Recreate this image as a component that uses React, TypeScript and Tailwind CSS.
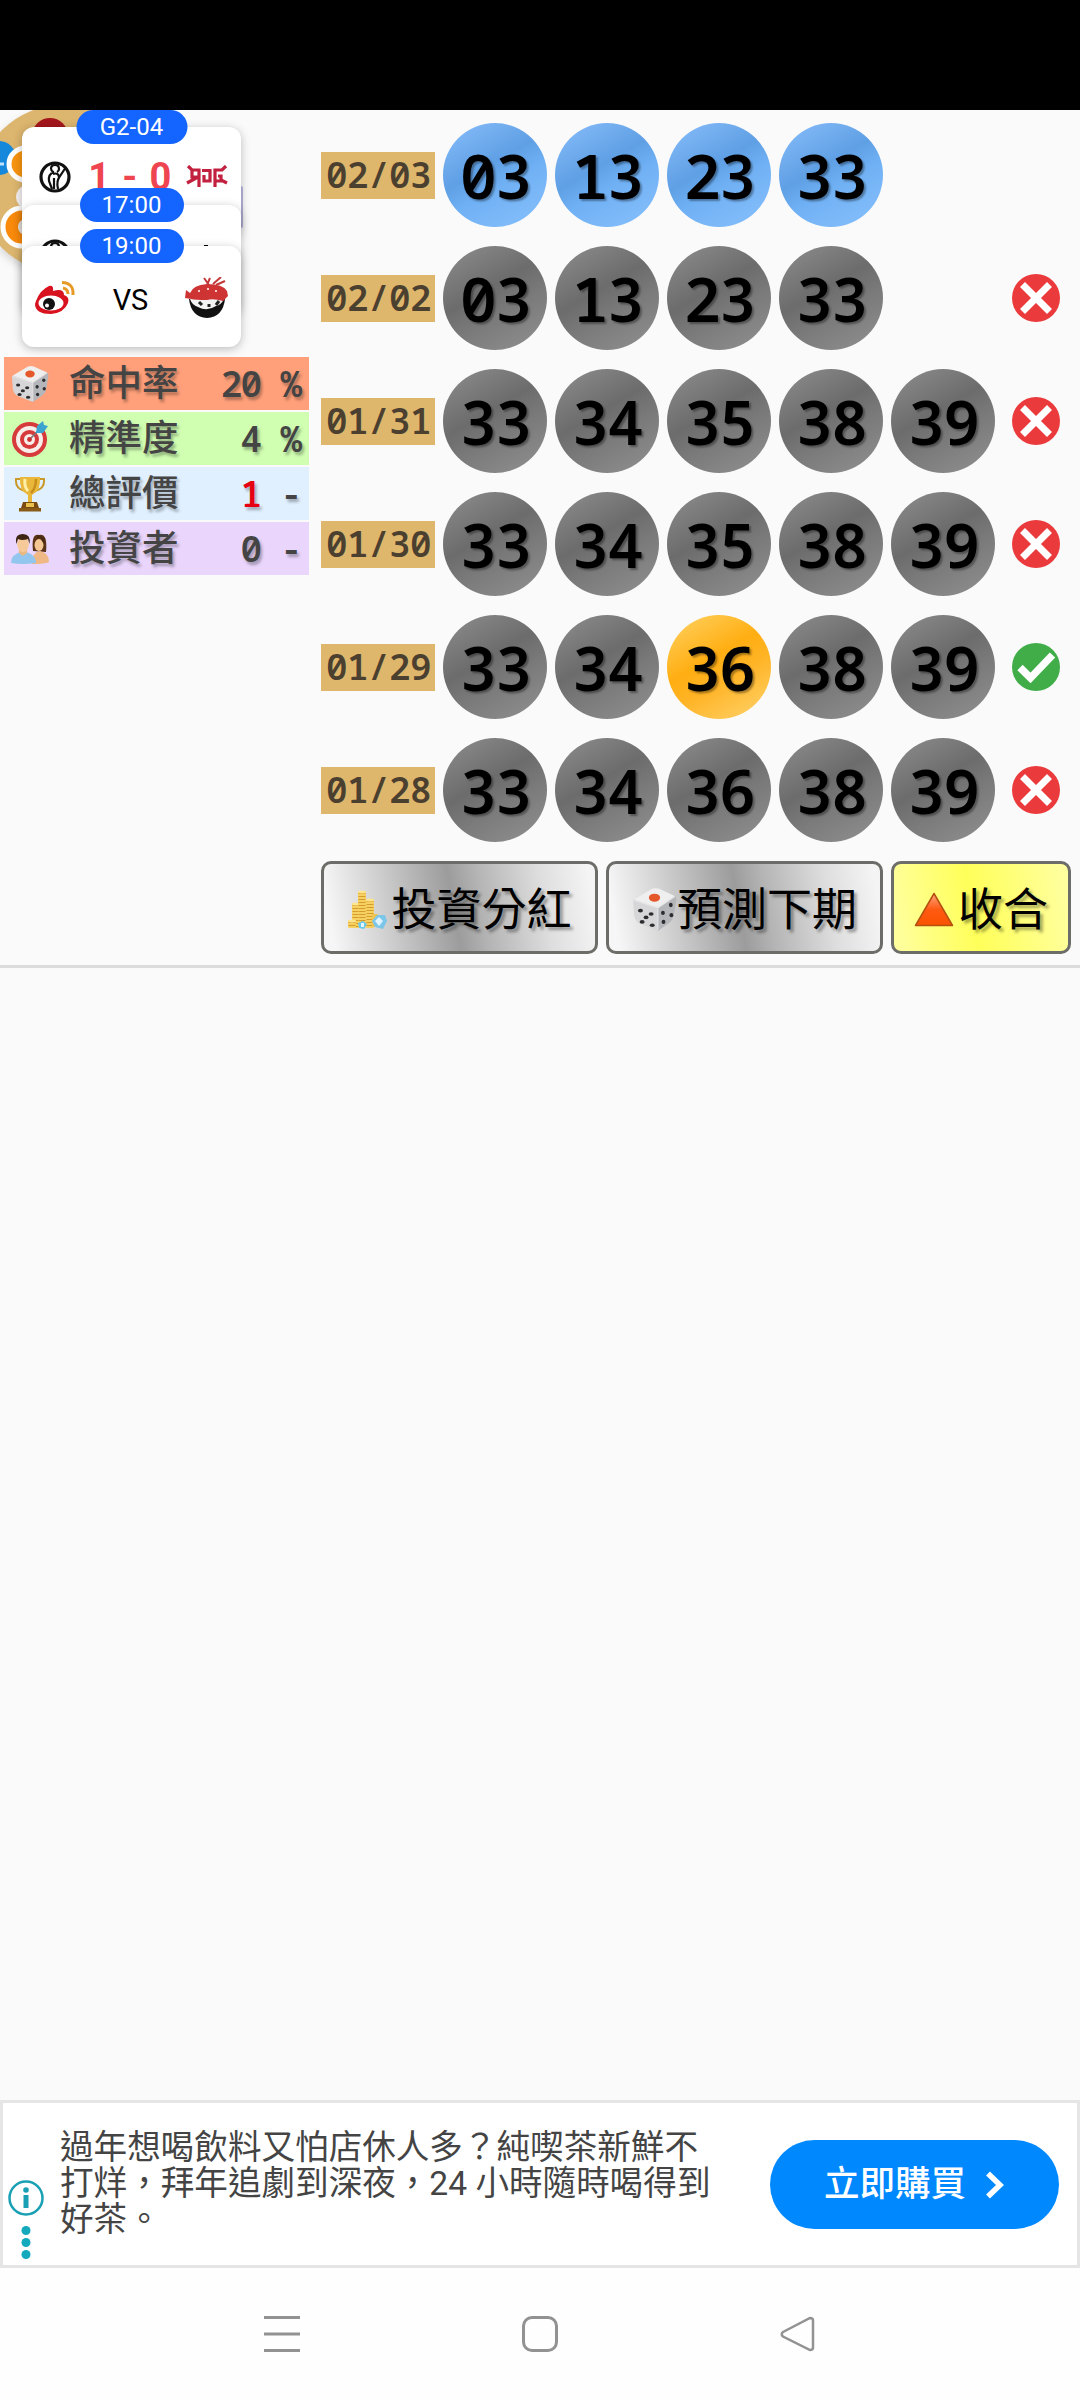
import type { ReactNode } from 'react'

type Tone = 'blue' | 'gray' | 'gold'

type Draw = {
  date: string
  numbers: string[]
  tone: Tone
  hit?: string
  result?: 'win' | 'lose'
}

const draws: Draw[] = [
  { date: '02/03', numbers: ['03', '13', '23', '33'], tone: 'blue' },
  { date: '02/02', numbers: ['03', '13', '23', '33'], tone: 'gray', result: 'lose' },
  { date: '01/31', numbers: ['33', '34', '35', '38', '39'], tone: 'gray', result: 'lose' },
  { date: '01/30', numbers: ['33', '34', '35', '38', '39'], tone: 'gray', result: 'lose' },
  { date: '01/29', numbers: ['33', '34', '36', '38', '39'], tone: 'gray', hit: '36', result: 'win' },
  { date: '01/28', numbers: ['33', '34', '36', '38', '39'], tone: 'gray', result: 'lose' },
]

const tones: Record<Tone, string> = {
  blue: 'bg-[linear-gradient(150deg,#84bbf9_5%,#5f9fe4_42%,#6fb0f4_58%,#86bffb_95%)]',
  gray: 'bg-[linear-gradient(150deg,#8a8a8a_5%,#6c6c6c_42%,#797979_60%,#8e8e8e_95%)]',
  gold: 'bg-[linear-gradient(150deg,#ffcf5c_5%,#ffae12_42%,#ffb426_60%,#ffd066_95%)]',
}

const mono = "font-['Noto_Sans_Mono','Liberation_Mono',monospace]"
const cjk = "font-['Roboto','Noto_Sans_CJK_TC',sans-serif]"

function Dice({ className }: { className: string }) {
  return (
    <svg viewBox="0 0 40 40" className={className}>
      <path d="M1 12 Q2 10 5 12 L23 18 L23 39 L6 32 Q3 30 2 26 Z" fill="#d6d6d8" />
      <path d="M23 18 L38 8 Q40 9 39 14 L37 26 Q36 30 33 32 L23 39 Z" fill="#b4b6ba" />
      <path d="M2 11 L17 2 Q20 0.500 24 1.500 L38 8 L23 18.500 Z" fill="#efefef" />
      <path d="M2 12 L23 18.500 L38 8.500 M23 18.500 V38" stroke="#e6e6e8" fill="none" />
      <ellipse cx="20" cy="9.500" rx="5" ry="3.600" fill="#e4582c" />
      <g fill="#2d2d30">
        <ellipse cx="7.500" cy="21" rx="2.200" ry="1.600" />
        <ellipse cx="17" cy="24" rx="2.200" ry="1.600" />
        <ellipse cx="12.500" cy="27" rx="2.200" ry="1.600" />
        <ellipse cx="9" cy="31" rx="2.200" ry="1.600" />
        <ellipse cx="18" cy="34" rx="2.200" ry="1.600" />
        <ellipse cx="34.500" cy="16" rx="1.700" ry="1.900" />
        <ellipse cx="27.500" cy="23" rx="1.700" ry="1.900" />
        <ellipse cx="35" cy="25" rx="1.700" ry="1.900" />
        <ellipse cx="28" cy="31" rx="1.700" ry="1.900" />
      </g>
    </svg>
  )
}

function Target({ className }: { className: string }) {
  return (
    <svg viewBox="0 0 36 36" className={className}>
      <circle cx="17.500" cy="18.500" r="17.500" fill="#d63a3a" />
      <circle cx="17.500" cy="18.500" r="13.500" fill="#f7eeea" />
      <circle cx="17.500" cy="18.500" r="9.500" fill="#d63a3a" />
      <circle cx="17.500" cy="18.500" r="5.500" fill="#f7eeea" />
      <path d="M17 19 L28 8" stroke="#777" strokeWidth="1.600" />
      <path d="M24 12 L25 5 L31 0 L32 4 L36 5 L31 12 Z" fill="#3aa3d0" />
      <circle cx="17.500" cy="18.500" r="2.400" fill="#c33" />
    </svg>
  )
}

function Trophy({ className }: { className: string }) {
  return (
    <svg viewBox="0 0 32 36" className={className}>
      <path d="M6 3 H2 Q1 13 11 15 M26 3 h4 Q31 13 21 15" fill="none" stroke="#c99a2a" strokeWidth="2" />
      <path d="M6 1 H26 Q27 15 18 19 L18 26 H14 L14 19 Q5 15 6 1 Z" fill="#e9b83a" />
      <path d="M11 3 Q10 11 14 15" stroke="#fff0a8" strokeWidth="3" fill="none" />
      <path d="M22 3 Q22 12 17 17" stroke="#c98f1c" strokeWidth="2.500" fill="none" />
      <path d="M9 26 H23 L25 32 H7 Z" fill="#7a4a10" />
      <rect x="12" y="27" width="8" height="4" fill="#e9c14c" />
      <rect x="5" y="32" width="22" height="3.500" fill="#8a5a18" />
    </svg>
  )
}

function Couple({ className }: { className: string }) {
  return (
    <svg viewBox="0 0 38 32" className={className}>
      <path d="M22 18 Q20 0 28 2 Q37 0 35 19 Z" fill="#5b3417" />
      <path d="M21 31 Q21 19 29 18 Q38 20 38 29 Q34 31 21 31 Z" fill="#f0b884" />
      <ellipse cx="28" cy="12" rx="4.500" ry="6" fill="#f4c794" />
      <path d="M23 11 Q25 4 29 5 L33 11 L34 5 L27 2 Z" fill="#4a2a12" />
      <path d="M0 30 Q0 21 12 18 Q25 21 25 30 Q12 32 0 30 Z" fill="#93c6ee" />
      <path d="M8 15 H16 V20 L12 23 L8 20 Z" fill="#eab981" />
      <ellipse cx="12" cy="11.500" rx="5.800" ry="7.500" fill="#f6ca98" />
      <path d="M5.500 11 Q3 1 12 1 Q20 1 18.500 11 L17 6 Q11 8 7 6 Z" fill="#3f2614" />
    </svg>
  )
}

function Coins({ className }: { className: string }) {
  const stacks = [
    { x: 5, top: 13 },
    { x: 11, top: 1 },
    { x: 19, top: 9 },
    { x: 1, top: 30 },
  ]
  return (
    <svg viewBox="0 0 40 40" className={className}>
      {stacks.map((s) => (
        <g key={s.x}>
          <rect x={s.x} y={s.top} width="8" height={38 - s.top} rx="1.500" fill="#f6d061" />
          <path
            d={`M${s.x + 4} ${s.top + 2} V38`}
            stroke="#d39c2c"
            strokeWidth="7"
            strokeDasharray="1 2"
          />
          <ellipse cx={s.x + 4} cy={s.top + 1} rx="4" ry="1.500" fill="#ffe58c" />
        </g>
      ))}
      <rect x="25" y="24" width="6" height="13" fill="#efc454" />
      <path d="M11 33 L16 31 L20 34 L17 39 L12 38 Z" fill="#6cc8ec" />
      <path d="M14 33 h3 v4 h-3 Z" fill="#e2f6ff" />
      <path d="M25 31 L30 25 L38 25 L40 31 L36 39 L28 37 Z" fill="#7cc6ea" />
      <path d="M28 31 L32 27 L36 31 L32 36 Z" fill="#dff4ff" />
    </svg>
  )
}

function RedTriangle({ className }: { className: string }) {
  return (
    <svg viewBox="0 0 40 36" className={className}>
      <defs>
        <linearGradient id="tri" x1="0" y1="0" x2="0" y2="1">
          <stop offset="0" stopColor="#ffa480" />
          <stop offset="0.500" stopColor="#ff5a12" />
          <stop offset="1" stopColor="#f95300" />
        </linearGradient>
      </defs>
      <path d="M20 1.500 L38.500 33.500 H1.500 Z" fill="url(#tri)" stroke="#b5500f" strokeWidth="1.500" strokeLinejoin="round" />
    </svg>
  )
}

function Result({ kind }: { kind: 'win' | 'lose' }) {
  return (
    <svg viewBox="0 0 48 48" className="size-12">
      <circle cx="24" cy="24" r="24" fill={kind === 'win' ? '#41ad49' : '#eb3a3c'} />
      {kind === 'win' ? (
        <path d="M8 24.500 L18.500 35 L40.500 12" fill="none" stroke="#fff" strokeWidth="7.500" />
      ) : (
        <path d="M10.500 10.500 L37.500 37.500 M37.500 10.500 L10.500 37.500" stroke="#fff" strokeWidth="7" />
      )}
    </svg>
  )
}

function DrawRow({ draw }: { draw: Draw }) {
  return (
    <div className="flex h-[104px] items-center">
      <div
        className={`flex h-[47px] w-[114px] items-center justify-center bg-[#dfb76c] pl-px text-[36px] leading-none font-semibold tracking-[-0.6px] text-[#4b4030] ${mono}`}
      >
        {draw.date}
      </div>
      <div className="ml-2 flex w-[569px] gap-2">
        {draw.numbers.map((n) => (
          <div
            key={n}
            className={`flex size-[104px] items-center justify-center rounded-full text-[62px] leading-none font-[650] tracking-[-2px] text-black [text-shadow:2px_2px_2px_rgba(0,0,0,0.35)] ${mono} ${tones[n === draw.hit ? 'gold' : draw.tone]}`}
          >
            {n}
          </div>
        ))}
      </div>
      {draw.result && <Result kind={draw.result} />}
    </div>
  )
}

function StatRow({ color, icon, label, value, unit, hot }: {
  color: string
  icon: ReactNode
  label: string
  value: string
  unit: string
  hot?: boolean
}) {
  return (
    <div
      className={`flex h-[53px] items-center text-[36px] leading-none font-medium text-[#444] [text-shadow:2px_3px_3px_rgba(0,0,0,0.3)] ${color}`}
    >
      <div className="flex w-[52px] justify-center">{icon}</div>
      <div className={`ml-[13px] w-[113px] pt-0.5 text-[36.500px] whitespace-nowrap ${cjk}`}>{label}</div>
      <div className={`flex flex-1 justify-end font-semibold tracking-[-2px] ${mono} ${hot ? 'text-[#e60012]' : ''}`}>
        {value}
      </div>
      <div className={`flex w-[49px] justify-end pr-[7px] font-semibold ${mono}`}>{unit}</div>
    </div>
  )
}

function IgLogo() {
  return (
    <svg viewBox="0 0 32 32" className="size-8">
      <circle cx="16" cy="16" r="14" fill="#fff" stroke="#111" strokeWidth="3.200" />
      <path d="M12 8 Q12 4 16 4 Q20 4 20 8 Q20 10 18 11 M12 8 Q13 11 15 11 Q9 13 10 20 L13 28 M27 6 L21 15 Q17 20 19 28 M14 13 Q20 11 20 17 M15 17 V28" fill="none" stroke="#111" strokeWidth="2.200" />
    </svg>
  )
}

function JdgLogo() {
  return (
    <svg viewBox="0 0 42 24" className="h-6 w-[42px]">
      <g fill="none" stroke="#c2203f" strokeWidth="3.200">
        <path d="M2 1 L6 5 H13 V22 M6 5 V12 H12 M12 12 L1 18" />
        <path d="M16 5.500 H24 V16 H18 V10" />
        <path d="M40 1 L36 5 H29 V22 M29 16 H35 V11 H32 M35 15 L41 18" />
      </g>
    </svg>
  )
}

function WeiboLogo() {
  return (
    <svg viewBox="0 0 42 34" className="h-[34px] w-[42px]">
      <path d="M2 20 Q6 9 15 5 Q20 4 19 10 Q30 7 30 14 Q36 16 34 22 Q30 32 17 33 Q1 33 1 23 Z" fill="#d9121f" />
      <ellipse cx="17" cy="22" rx="12.500" ry="7.500" fill="#fff" />
      <circle cx="15" cy="23" r="6" fill="#111" />
      <circle cx="13" cy="24.500" r="2" fill="#fff" />
      <path d="M28 1.500 Q40 2 39 14 M29 7 Q34 8 34 13" fill="none" stroke="#e79a27" strokeWidth="3" />
    </svg>
  )
}

function BowlLogo() {
  return (
    <svg viewBox="0 0 44 42" className="h-[42px] w-11">
      <path d="M4 22 Q6 40 22 41 Q38 40 40 22 Z" fill="#111" />
      <path d="M5 22 H39 Q36 28 31 29 Q22 35 13 30 Q7 28 5 22 Z" fill="#f3f3f3" />
      <path d="M1 13 L5 16 Q8 8 22 7 Q38 7 42 14 L43 19 L38 24 Q28 21 22 23 Q10 23 6 22 L0 21 Z" fill="#cf3434" />
      <path d="M19 1 L24 8 M25 1 L22 8 M28 7 L36 0 M31 8 L40 4" stroke="#c43a3a" strokeWidth="2" />
      <path d="M14 25 L17 28 M24 27 V30 M34 24 L31 28" stroke="#222" strokeWidth="3" />
      <path d="M13 14 h2 M22 12 h2 M30 14 h2" stroke="#f6caca" strokeWidth="2" />
    </svg>
  )
}

function Pill({ children, className }: { children: string; className: string }) {
  return (
    <div className={`absolute left-1/2 flex h-[34px] -translate-x-1/2 items-center justify-center rounded-full bg-[#1464ff] text-[24px] leading-none text-white ${cjk} ${className}`}>
      {children}
    </div>
  )
}

// Lottery palette peeking out behind the match cards.
function Palette() {
  return (
    <svg viewBox="0 0 160 160" className="absolute top-0 left-0 size-40 drop-shadow-lg">
      <circle cx="62" cy="79" r="84" fill="#dcb56e" />
      <circle cx="50" cy="26" r="18" fill="#a3161c" />
      <circle cx="-1" cy="48" r="17" fill="#1688dc" />
      <path d="M-4 54 h8" stroke="#bfe4ff" strokeWidth="3" />
      <ellipse cx="26" cy="54" rx="17" ry="16" fill="#f79410" stroke="#fff" strokeWidth="5" />
      <ellipse cx="26" cy="87" rx="10" ry="11" fill="#f4f0f2" />
      <ellipse cx="22" cy="117" rx="19" ry="19" fill="#f98a0c" stroke="#fff" strokeWidth="5" />
      <ellipse cx="26" cy="117" rx="8" ry="8" fill="#f1ece8" />
    </svg>
  )
}

function MatchCards() {
  const card = 'absolute left-0 w-full rounded-xl bg-white shadow-[0_2px_10px_rgba(0,0,0,0.25)]'
  return (
    <div className="absolute top-0 left-[22px] h-[237px] w-[219px]">
      <div className="absolute top-[76px] left-[217px] h-[42px] w-1 rounded bg-[#b9b6e0]" />
      <div className={`${card} top-[17px] h-[110px]`}>
        <div className="flex items-center justify-between px-[13px] pt-[34px]">
          <div className="w-10 pl-1"><IgLogo /></div>
          <span className="font-['Roboto',sans-serif] text-[38px] leading-8 font-bold tracking-[1.400px] whitespace-pre text-[#ef4550]">
            1 - 0
          </span>
          <JdgLogo />
        </div>
        <Pill className="-top-[17px] w-[111px]">G2-04</Pill>
      </div>
      <div className={`${card} top-[95px] h-[110px]`}>
        <div className="flex h-[41px] items-end justify-between overflow-hidden px-[17px]">
          <div className="h-[7px] overflow-hidden"><IgLogo /></div>
          <span className="mr-4 h-px w-1 bg-black" />
        </div>
        <Pill className="-top-[17px] w-[104px]">17:00</Pill>
      </div>
      <div className={`${card} top-[136px] h-[101px]`}>
        <div className="flex items-center justify-between px-3 pt-[31px]">
          <WeiboLogo />
          <span className={`pt-1 text-[29px] leading-none text-black ${cjk}`}>VS</span>
          <BowlLogo />
        </div>
        <Pill className="-top-[17px] w-[104px]">19:00</Pill>
      </div>
    </div>
  )
}

function ActionButton({ icon, label, className }: { icon: ReactNode; label: string; className: string }) {
  return (
    <button
      className={`flex h-[93px] items-center justify-center rounded-[10px] border-3 border-[#6c6c68] pt-1 text-[45px] leading-none text-black [text-shadow:3px_3px_3px_rgba(0,0,0,0.35)] ${cjk} ${className}`}
    >
      {icon}
      <span className="pt-0.5">{label}</span>
    </button>
  )
}

const silver = 'bg-[linear-gradient(80deg,#f6f6f6_4%,#dadada_18%,#9c9c9c_48%,#b4b4b4_58%,#dedede_80%,#f4f4f4_97%)]'
const yellow = 'bg-[linear-gradient(80deg,#ffff9c_4%,#ffff5a_45%,#ffff6c_60%,#ffff9e_96%)]'

function AdBanner() {
  return (
    <div className="flex h-[168px] items-center border-3 border-[#e5e5e5] bg-white">
      <div className="flex w-[45px] flex-col items-center self-end pb-[6px]">
        <svg viewBox="0 0 38 80" className="h-20 w-[38px]">
          <circle cx="19" cy="19" r="16.500" fill="none" stroke="#1aa0b4" strokeWidth="2.500" />
          <circle cx="19" cy="11" r="2.800" fill="#1aa0b4" />
          <rect x="16.500" y="16" width="5" height="13" fill="#1aa0b4" />
          <circle cx="19" cy="51.500" r="4.500" fill="#14a9bd" />
          <circle cx="19" cy="63.500" r="4.500" fill="#14a9bd" />
          <circle cx="19" cy="75.500" r="4.500" fill="#14a9bd" />
        </svg>
      </div>
      <p className={`ml-3 w-[710px] text-[33.600px] leading-[36.300px] whitespace-nowrap text-[#444] ${cjk}`}>
        過年想喝飲料又怕店休人多？純喫茶新鮮不
        <br />
        打烊，拜年追劇到深夜，24 小時隨時喝得到
        <br />
        好茶。
      </p>
      <button className={`flex h-[89px] w-[289px] items-center justify-center gap-[19px] rounded-full bg-[#0088ff] pt-0.5 text-[35.500px] font-medium text-white ${cjk}`}>
        立即購買
        <svg viewBox="0 0 20 28" className="h-7 w-5">
          <path d="M3 2.500 L15 14 L3 25.500" fill="none" stroke="#fff" strokeWidth="5.500" />
        </svg>
      </button>
    </div>
  )
}

function SystemNav() {
  return (
    <div className="flex h-[132px] items-center justify-between bg-[#fefefe] px-[264px]">
      <svg viewBox="0 0 36 36" className="size-9">
        <path d="M0 1.500 H36 M0 18 H36 M0 34.500 H36" stroke="#929292" strokeWidth="3" />
      </svg>
      <div className="size-9 rounded-[10px] border-3 border-[#929292]" />
      <svg viewBox="0 0 36 36" className="size-9">
        <path d="M3 16 L30 2 Q33 2 33 4.500 V31.500 Q33 34 30 34 L3 20.500 Q0.500 18 3 16 Z" fill="none" stroke="#929292" strokeWidth="2.500" />
      </svg>
    </div>
  )
}

export default function App() {
  return (
    <div className="flex h-[2400px] w-[1080px] flex-col overflow-hidden bg-[#fafafa]">
      <div className="h-[110px] bg-black" />

      <section className="relative flex h-[858px] border-b-3 border-[#dcdcdc]">
        <aside className="w-[321px] pt-[247px] pr-3 pl-1">
          <div className="flex flex-col gap-0.5">
            <StatRow color="bg-[#ffa07a]" icon={<Dice className="size-[38px]" />} label="命中率" value="20" unit="%" />
            <StatRow color="bg-[#d0ffb2]" icon={<Target className="size-9" />} label="精準度" value="4" unit="%" />
            <StatRow color="bg-[#e0f0ff]" icon={<Trophy className="h-9 w-8" />} label="總評價" value="1" unit="-" hot />
            <StatRow color="bg-[#ead6fd]" icon={<Couple className="h-8 w-[38px]" />} label="投資者" value="0" unit="-" />
          </div>
        </aside>

        <div className="w-[750px] pt-[13px]">
          <div className="flex flex-col gap-[19px]">
            {draws.map((d) => (
              <DrawRow key={d.date} draw={d} />
            ))}
          </div>
          <div className="mt-[19px] flex gap-2">
            <ActionButton className={`w-[277px] ${silver}`} icon={<Coins className="mr-1 size-10" />} label="投資分紅" />
            <ActionButton className={`w-[277px] ${silver}`} icon={<Dice className="size-[45px]" />} label="預測下期" />
            <ActionButton className={`w-[180px] ${yellow}`} icon={<RedTriangle className="mr-1 h-9 w-10" />} label="收合" />
          </div>
        </div>

        <div className="absolute top-0 left-0 size-60">
          <Palette />
          <MatchCards />
        </div>
      </section>

      <main className="flex-1" />
      <AdBanner />
      <SystemNav />
    </div>
  )
}
